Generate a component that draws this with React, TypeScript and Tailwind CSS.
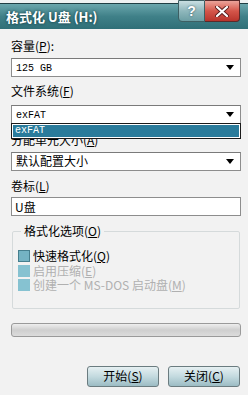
import React from "react";

const cjk = { fontFamily: '"Noto Sans CJK SC", "Liberation Sans", sans-serif' };
const mono = { fontFamily: '"Liberation Mono", "Noto Sans CJK SC", monospace' };

function Arrow() {
  return (
    <svg width="8" height="5" viewBox="0 0 8 5" className="shrink-0">
      <path d="M0 0 H8 L4 5 Z" fill="#000" />
    </svg>
  );
}

function Combo({ children }: { children: React.ReactNode }) {
  return (
    <div className="h-[19px] bg-white border border-[#8d8d8d] border-t-[#7a7a7a] flex items-center pl-[4px] pr-[6px]">
      <div className="flex-1 text-[12px] leading-[16px] text-black overflow-hidden whitespace-nowrap">{children}</div>
      <Arrow />
    </div>
  );
}

function Label({ children, className = "" }: { children: React.ReactNode; className?: string }) {
  return (
    <div className={"h-[14px] text-[12px] leading-[14px] text-black whitespace-nowrap " + className} style={cjk}>
      {children}
    </div>
  );
}

function Check({ dark, disabled, children }: { dark?: boolean; disabled?: boolean; children: React.ReactNode }) {
  return (
    <div className="h-[14.5px] flex items-center gap-[3px]">
      <div
        className={
          "w-[12px] h-[12px] shrink-0 border " +
          (dark ? "bg-[#74b3c3] border-[#467f8e]" : "bg-[#86c2d1] border-[#86c2d1]")
        }
      />
      <div
        className={"text-[12px] leading-[14px] whitespace-nowrap " + (disabled ? "text-[#b0b0b0]" : "text-black")}
        style={cjk}
      >
        {children}
      </div>
    </div>
  );
}

function Btn({ children }: { children: React.ReactNode }) {
  return (
    <div
      className="w-[72px] h-[21px] rounded-[3px] border border-[#6b7c80] bg-gradient-to-b from-[#e6f0f2] via-[#c3dadf] to-[#9cbcc4] flex items-center justify-center text-[12px] leading-[14px] text-black"
      style={cjk}
    >
      {children}
    </div>
  );
}

export default function App() {
  return (
    <div className="w-[248px] h-[395px] bg-[#f2f2f2] overflow-hidden flex flex-col">
      {/* title bar */}
      <div className="relative h-[29px] shrink-0 border-t-[3px] border-[#eef2f2]">
        <div className="h-full bg-gradient-to-b from-[#6aa7ad] via-[#3f8088] to-[#2f6f77] border-t border-[#1f3f44] flex items-center pl-[6px]">
          <span
            className="text-white font-bold text-[13px] leading-[15px] whitespace-nowrap [text-shadow:0_0_3px_#0b2f34]"
            style={cjk}
          >
            格式化 U盘 (H:)
          </span>
        </div>
        <div className="absolute -top-[3px] right-[8px] flex">
          <div className="w-[27px] h-[22px] rounded-bl-[4px] border border-[#3d5f63] bg-gradient-to-b from-[#c9dfe2] via-[#8fb7bc] to-[#6c9ea4] flex items-center justify-center">
            <span className="text-white font-bold text-[14px] leading-[14px] [text-shadow:0_0_2px_#2a4a50]" style={{ fontFamily: '"Liberation Sans", sans-serif' }}>
              ?
            </span>
          </div>
          <div className="w-[35px] h-[22px] rounded-br-[4px] border border-l-0 border-[#5a2a2a] bg-gradient-to-b from-[#eaa39a] via-[#d4554a] to-[#b8342c] flex items-center justify-center">
            <svg width="14" height="11" viewBox="0 0 14 11">
              <path d="M2 1 L12 10 M12 1 L2 10" stroke="#5a1f1f" strokeWidth="4" strokeLinecap="round" />
              <path d="M2 1 L12 10 M12 1 L2 10" stroke="#ffffff" strokeWidth="2.2" strokeLinecap="round" />
            </svg>
          </div>
        </div>
      </div>

      {/* body */}
      <div className="flex flex-col pl-[11px] pr-[7px]">
        <Label className="mt-[10px]">
          容量(<span className="underline">P</span>):
        </Label>
        <div className="mt-[5px]">
          <Combo>
            <span style={mono} className="text-[10px]">125 GB</span>
          </Combo>
        </div>

        <Label className="mt-[7px]">
          文件系统(<span className="underline">F</span>)
        </Label>
        <div className="mt-[7px] relative">
          <Combo>
            <span style={mono} className="text-[10px]">exFAT</span>
          </Combo>
          <div className="absolute left-0 right-0 top-[18px] h-[16px] border border-[#1a1a1a] bg-white z-10 p-[1px]">
            <div className="h-full bg-[#2a7b9b] flex items-center pl-[2px]">
              <span style={mono} className="text-[10px] leading-[12px] text-white">exFAT</span>
            </div>
          </div>
        </div>

        <Label className="mt-[9px]">
          分配单元大小(<span className="underline">A</span>)
        </Label>
        <div className="mt-[5px]">
          <Combo>
            <span style={cjk}>默认配置大小</span>
          </Combo>
        </div>

        <Label className="mt-[8px]">
          卷标(<span className="underline">L</span>)
        </Label>
        <div className="mt-[4px] h-[19px] bg-white border border-[#8d8d8d] flex items-center pl-[3px] text-[12px] leading-[14px] text-black" style={cjk}>
          U盘
        </div>

        <fieldset className="mt-[8px] mx-[1px] border border-[#d5dadb] rounded-[2px] pl-[5px] pb-[15px] pt-[11px]">
          <legend className="ml-[3px] px-[3px] text-[12px] leading-[14px] text-black" style={cjk}>
            格式化选项(<span className="underline">O</span>)
          </legend>
          <Check dark>
            快速格式化(<span className="underline">Q</span>)
          </Check>
          <Check disabled>
            启用压缩(<span className="underline">E</span>)
          </Check>
          <Check disabled>
            创建一个 MS-DOS 启动盘(<span className="underline">M</span>)
          </Check>
        </fieldset>

        <div className="mt-[14px] h-[14px] rounded-[3px] border border-[#9a9a9a] bg-gradient-to-b from-[#eeeeee] via-[#cfcfcf] to-[#dcdcdc]" />

        <div className="mt-[29px] flex justify-end gap-[9px] pr-[1px]">
          <Btn>
            开始(<span className="underline">S</span>)
          </Btn>
          <Btn>
            关闭(<span className="underline">C</span>)
          </Btn>
        </div>
      </div>
    </div>
  );
}
